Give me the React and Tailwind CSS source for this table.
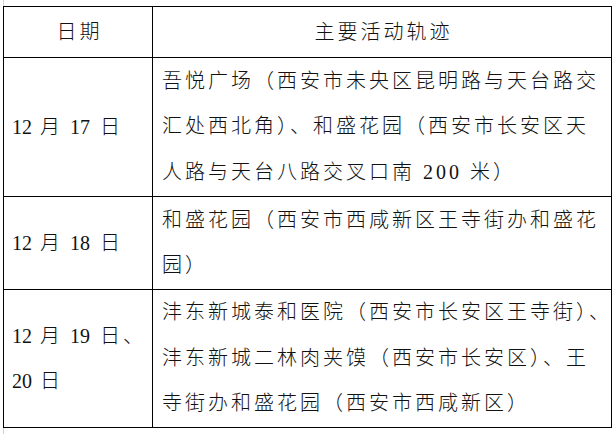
import React from 'react';

// date parts: [text, left margin class]
const rows = [
    {
        h: 'h-[139px]',
        date: [[['12', ''], ['月', 'ml-[8px]'], ['17', 'ml-[10px]'], ['日', 'ml-[10px]']]],
        lines: [
            '吾悦广场（西安市未央区昆明路与天台路交',
            '汇处西北角）、和盛花园（西安市长安区天',
            '人路与天台八路交叉口南 200 米）',
        ],
    },
    {
        h: 'h-[93px]',
        date: [[['12', ''], ['月', 'ml-[8px]'], ['18', 'ml-[10px]'], ['日', 'ml-[10px]']]],
        lines: ['和盛花园（西安市西咸新区王寺街办和盛花', '园）'],
    },
    {
        h: 'h-[138px]',
        date: [
            [['12', ''], ['月', 'ml-[8px]'], ['19', 'ml-[10px]'], ['日', 'ml-[10px]'], ['、', 'ml-[3px]']],
            [['20', ''], ['日', 'ml-[8px]']],
        ],
        lines: [
            '沣东新城泰和医院（西安市长安区王寺街）、',
            '沣东新城二林肉夹馍（西安市长安区）、王',
            '寺街办和盛花园（西安市西咸新区）',
        ],
    },
];

const App = () => {
    return (
        <div
            className="w-[614px] h-[434px] bg-white pl-[3px] text-[20px] tracking-[3px] text-[#111] font-light"
            style={{ fontFamily: '"Liberation Serif", "Noto Sans CJK SC", serif' }}
        >
            <div className="w-px h-[6px] bg-[#d4d4d4]" />
            <table className="border-collapse table-fixed w-[608px]">
                <colgroup>
                    <col className="w-[149px]" />
                    <col className="w-[459px]" />
                </colgroup>
                <thead>
                    <tr className="h-[51px]">
                        <th className="border border-black font-light text-center align-middle pl-[3px]">日期</th>
                        <th className="border border-black font-light text-center align-middle pl-[3px]">主要活动轨迹</th>
                    </tr>
                </thead>
                <tbody>
                    {rows.map((r, i) => (
                        <tr key={i} className={r.h}>
                            <td className="border border-black align-middle pl-[8px] leading-[45px] whitespace-nowrap tracking-normal">
                                {r.date.map((d, j) => (
                                    <div key={j}>
                                        {d.map(([t, m], k) => (
                                            <span key={k} className={m}>{t}</span>
                                        ))}
                                    </div>
                                ))}
                            </td>
                            <td className="border border-black align-middle pl-[9px] leading-[45.5px] whitespace-nowrap">
                                {r.lines.map((l, j) => (
                                    <div key={j}>{l}</div>
                                ))}
                            </td>
                        </tr>
                    ))}
                </tbody>
            </table>
            <div className="w-px h-[6px] bg-[#d4d4d4]" />
        </div>
    );
};

export default App;
